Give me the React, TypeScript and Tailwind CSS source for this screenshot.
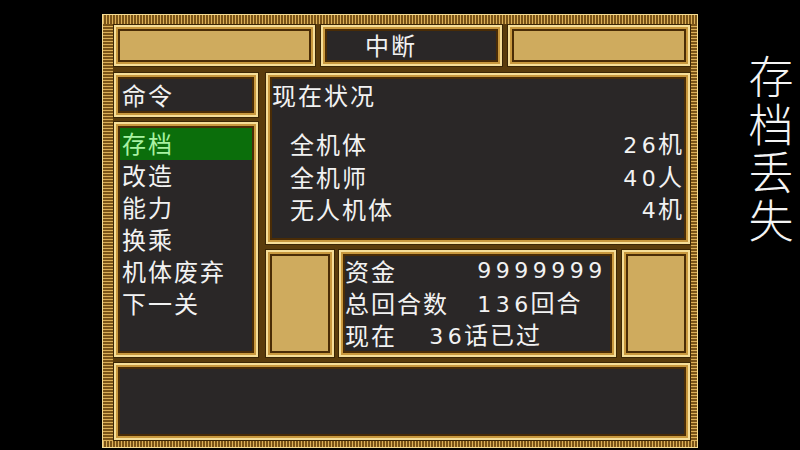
import React from "react";

type PanelProps = {
  gold?: boolean;
  className?: string;
  children?: React.ReactNode;
};

// gold bevelled box used for every window on the menu screen
const Panel: React.FC<PanelProps> = ({ gold, className = "", children }) => (
  <div className={`border border-[#3a2606] ${className}`}>
    <div className="h-full border-2 border-[#f6de98] bg-[#c8983e] p-[2px]">
      <div
        className={`h-full border-2 border-[#4a2c06] ${
          gold ? "bg-[#cfab5e]" : "bg-[#2a2727]"
        }`}
      >
        {children}
      </div>
    </div>
  </div>
);

// the game's digits sit in fixed-width cells
const Num: React.FC<{ value: string }> = ({ value }) => (
  <span className="font-['DejaVu_Sans',sans-serif] text-[22px] tracking-normal">
    {value.split("").map((d, i) => (
      <span key={i} className="inline-block w-[18.5px] text-center">
        {d}
      </span>
    ))}
  </span>
);

const commands = ["存档", "改造", "能力", "换乘", "机体废弃", "下一关"];

const status = [
  { label: "全机体", num: "26", unit: "机" },
  { label: "全机师", num: "40", unit: "人" },
  { label: "无人机体", num: "4", unit: "机" },
];

export default function App() {
  return (
    <div className="w-[800px] h-[450px] bg-black flex items-start overflow-hidden font-['Noto_Sans_CJK_SC','Noto_Sans',sans-serif] text-[24px] tracking-[2px] leading-none text-[#f2f2f2]">
      {/* outer frame */}
      <div className="ml-[102px] mt-[14px] w-[596px] h-[434px] shrink-0 border border-[#f4dc94] bg-[#6b4a14] flex flex-col">
        <div className="h-[9px] shrink-0 bg-[repeating-linear-gradient(90deg,#dcb058_0_1px,#7a5418_1px_3px)]" />
        <div className="flex flex-1">
          <div className="w-[10px] shrink-0 bg-[repeating-linear-gradient(0deg,#dcb058_0_1px,#7a5418_1px_3px)]" />
          <div className="w-[578px] bg-[#5a3c0c] flex flex-col">
            {/* top row */}
            <div className="h-[43px] flex gap-[4px]">
              <Panel gold className="w-[203px]" />
              <Panel className="w-[183px]">
                <div className="h-full flex items-center pl-[38px] pb-[1px]">中断</div>
              </Panel>
              <Panel gold className="w-[184px]" />
            </div>

            <div className="h-[286px] mt-[5px] flex gap-[6px]">
              {/* left column */}
              <div className="w-[146px] flex flex-col gap-[3px]">
                <Panel className="h-[46px]">
                  <div className="h-full flex items-center pl-[2px] pb-[1px]">命令</div>
                </Panel>
                <Panel className="h-[237px]">
                  <div className="flex flex-col">
                    {commands.map((c, i) => (
                      <div
                        key={c}
                        className={`h-[32px] flex items-center pl-[2px] pb-[3px] ${
                          i === 0 ? "bg-[#0b6e0b] text-[#a8f2a2]" : ""
                        }`}
                      >
                        {c}
                      </div>
                    ))}
                  </div>
                </Panel>
              </div>

              {/* right column */}
              <div className="w-[426px] flex flex-col gap-[4px]">
                <Panel className="h-[173px]">
                  <div className="flex flex-col">
                    <div className="h-[32px] flex items-center">现在状况</div>
                    <div className="mt-[17px] flex flex-col pl-[18px]">
                      {status.map((s) => (
                        <div key={s.label} className="h-[32.5px] flex items-center justify-between">
                          <span>{s.label}</span>
                          <span>
                            <Num value={s.num} />
                            {s.unit}
                          </span>
                        </div>
                      ))}
                    </div>
                  </div>
                </Panel>
                <div className="h-[109px] flex">
                  <Panel gold className="w-[70px]" />
                  <Panel className="w-[279px] ml-[3px]">
                    <div className="flex flex-col">
                      <div className="h-[32px] flex items-center pb-[3px]">
                        <span className="w-[130px]">资金</span>
                        <Num value="9999999" />
                      </div>
                      <div className="h-[32px] flex items-center pb-[3px]">
                        <span className="w-[130px]">总回合数</span>
                        <span>
                          <Num value="136" />
                          回合
                        </span>
                      </div>
                      <div className="h-[32px] flex items-center pb-[3px]">
                        <span className="w-[82px]">现在</span>
                        <span>
                          <Num value="36" />
                          话已过
                        </span>
                      </div>
                    </div>
                  </Panel>
                  <Panel gold className="w-[70px] ml-[4px]" />
                </div>
              </div>
            </div>

            {/* message window */}
            <Panel className="h-[79px] mt-[4px]" />
          </div>
          <div className="w-[6px] shrink-0 bg-[repeating-linear-gradient(0deg,#dcb058_0_1px,#7a5418_1px_3px)]" />
        </div>
        <div className="h-[6px] shrink-0 bg-[repeating-linear-gradient(90deg,#dcb058_0_1px,#7a5418_1px_3px)]" />
      </div>

      {/* vertical caption, one glyph per line */}
      <div className="ml-[49px] mt-[51px] w-[48px] shrink-0 text-center break-all text-[45px] leading-[48px] tracking-normal font-light text-[#f4f4f4]">
        存档丢失
      </div>
    </div>
  );
}
